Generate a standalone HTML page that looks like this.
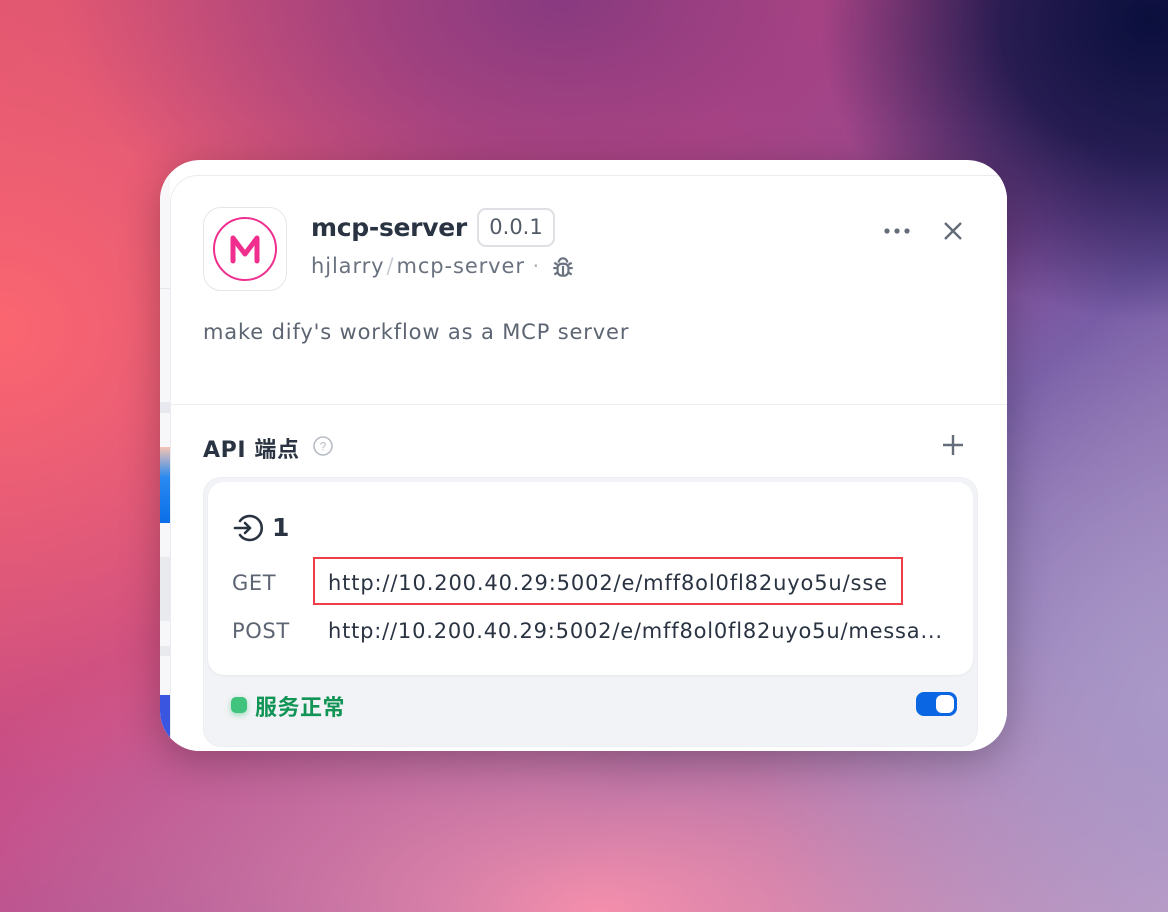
<!DOCTYPE html>
<html><head><meta charset="utf-8"><style>
*{margin:0;padding:0;box-sizing:border-box}
body{width:1168px;height:912px;overflow:hidden;position:relative;font-family:"DejaVu Sans","Noto Sans CJK SC",sans-serif;
background:
radial-gradient(ellipse 330px 300px at 1150px 20px,#0a0f3c 0%,rgba(20,20,70,.85) 45%,rgba(40,30,90,0) 100%),
radial-gradient(ellipse 420px 500px at 1168px 700px,#a998c8 0%,rgba(150,130,190,0) 100%),
radial-gradient(ellipse 500px 300px at 560px 0px,#883a80 0%,rgba(140,60,130,0) 100%),
radial-gradient(ellipse 520px 460px at 0px 330px,#fb6670 0%,rgba(244,98,108,0) 100%),
radial-gradient(ellipse 700px 350px at 600px 912px,#f58fac 0%,rgba(240,122,166,0) 100%),
linear-gradient(135deg,#d95270 0%,#c04a88 40%,#6a4c9c 68%,#c0a4cc 100%);}
.win{position:absolute;left:160px;top:160px;width:847px;height:591px;background:#fff;border-radius:40px;overflow:hidden;box-shadow:0 10px 40px rgba(0,0,0,.25)}
.strip{position:absolute;left:0;top:0;width:10px;height:591px;background:#f7f7f9}
.panel{position:absolute;left:10px;top:15px;width:840px;height:600px;background:#fff;border:1px solid #ececf0;border-radius:28px 0 0 0}
.abs{position:absolute}
</style></head><body>
<div class="win">
 <div class="strip">
  <div class="abs" style="top:128px;left:0;width:10px;height:1px;background:#e5e5ea"></div>
  <div class="abs" style="top:242px;left:0;width:10px;height:11px;background:#e8e9ee"></div>
  <div class="abs" style="top:287px;left:0;width:10px;height:76px;background:linear-gradient(#f5c4b4,#2a8af0 40%,#0a6ee8)"></div>
  <div class="abs" style="top:397px;left:0;width:10px;height:64px;background:#e9eaee"></div>
  <div class="abs" style="top:486px;left:0;width:10px;height:10px;background:#e9eaee"></div>
  <div class="abs" style="top:535px;left:0;width:10px;height:45px;background:#3a56e0"></div>
 </div>
 <div class="panel">
  <div class="abs" style="left:32px;top:31px;width:84px;height:84px;border:1px solid #e6e6ea;border-radius:18px;background:#fff">
   <svg width="84" height="84" viewBox="0 0 84 84" style="position:absolute;left:-1px;top:-1px"><circle cx="42" cy="42" r="31" fill="none" stroke="#ef2e8e" stroke-width="2"/><path d="M30 54V31l12 16 12-16v23" fill="none" stroke="#ef2e8e" stroke-width="5" stroke-linejoin="round" stroke-linecap="round"/></svg>
  </div>
  <div class="abs" style="left:140px;top:37px;font-size:25px;font-weight:bold;color:#2a3342;letter-spacing:-0.3px">mcp-server</div>
  <div class="abs" style="left:306px;top:32px;width:78px;height:39px;border:2px solid #dfe0e4;border-radius:9px;font-size:21px;color:#535b67;text-align:center;line-height:35px">0.0.1</div>
  <div class="abs" style="left:140px;top:78px;font-size:21px;color:#6a7280;white-space:nowrap;letter-spacing:0.9px">hjlarry<span style="color:#c8ccd2;margin:0 2px">/</span>mcp-server <span style="color:#b0b4ba">·</span></div>
  <svg class="abs" style="left:379px;top:78px" width="26" height="26" viewBox="0 0 24 24" fill="none" stroke="#6a7280" stroke-width="2"><path d="M8 8a4 4 0 0 1 8 0"/><rect x="7" y="9" width="10" height="11" rx="4"/><path d="M12 11v9M3 13h4M17 13h4M4 8l3 2M20 8l-3 2M4 19l3-2M20 19l-3-2"/></svg>
  <div class="abs" style="left:32px;top:144px;font-size:21px;color:#5d6573;letter-spacing:0.85px">make dify's workflow as a MCP server</div>
  <svg class="abs" style="left:712px;top:50px" width="28" height="10" viewBox="0 0 28 10" fill="#646c7a"><circle cx="4" cy="5" r="2.6"/><circle cx="14" cy="5" r="2.6"/><circle cx="24" cy="5" r="2.6"/></svg>
  <svg class="abs" style="left:771px;top:44px" width="22" height="22" viewBox="0 0 22 22" stroke="#646c7a" stroke-width="2.4"><path d="M3 3l16 16M19 3L3 19"/></svg>
  <div class="abs" style="left:0;top:228px;width:840px;height:1px;background:#efeff2"></div>
  <div class="abs" style="left:32px;top:256px;font-size:22px;font-weight:bold;color:#2a3342;letter-spacing:0.6px">API 端点</div>
  <svg class="abs" style="left:141px;top:259px" width="22" height="22" viewBox="0 0 22 22"><circle cx="11" cy="11" r="9" fill="none" stroke="#b8bcc4" stroke-width="1.6"/><text x="11" y="15.5" text-anchor="middle" font-size="12" fill="#b8bcc4" font-family="Liberation Sans">?</text></svg>
  <svg class="abs" style="left:771px;top:258px" width="22" height="22" viewBox="0 0 22 22" stroke="#646c7a" stroke-width="2.4"><path d="M11 1v20M1 11h20"/></svg>
  <div class="abs" style="left:32px;top:301px;width:775px;height:270px;background:#f2f3f6;border-radius:18px;border:1px solid #eceef2">
   <div class="abs" style="left:4px;top:4px;width:765px;height:193px;background:#fff;border-radius:16px;box-shadow:0 1px 2px rgba(0,0,0,.05)">
    <svg class="abs" style="left:24px;top:30px" width="32" height="32" viewBox="0 0 32 32" fill="none" stroke="#2a3342" stroke-width="2.6" stroke-linecap="round" stroke-linejoin="round"><path d="M8 9a12 12 0 1 1 0 14"/><path d="M3 16h15M13 11l5 5-5 5"/></svg>
    <div class="abs" style="left:64px;top:31px;font-size:25px;font-weight:bold;color:#2a3342">1</div>
    <div class="abs" style="left:24px;top:89px;font-size:21px;color:#5d6573;letter-spacing:0.6px">GET</div>
    <div class="abs" style="left:24px;top:137px;font-size:21px;color:#5d6573;letter-spacing:0.6px">POST</div>
    <div class="abs" style="left:105px;top:75px;width:590px;height:48px;border:2px solid #ef3d4a"></div>
    <div class="abs" style="left:120px;top:89px;font-size:21px;color:#2a3342;white-space:nowrap;letter-spacing:0.85px">http://10.200.40.29:5002/e/mff8ol0fl82uyo5u/sse</div>
    <div class="abs" style="left:120px;top:137px;font-size:21px;color:#2a3342;white-space:nowrap;letter-spacing:0.8px">http://10.200.40.29:5002/e/mff8ol0fl82uyo5u/messa...</div>
   </div>
   <div class="abs" style="left:27px;top:219px;width:16px;height:16px;border-radius:5px;background:#3fc37d;box-shadow:0 2px 6px rgba(63,195,125,.5)"></div>
   <div class="abs" style="left:51px;top:212px;font-size:22px;font-weight:bold;color:#119456;letter-spacing:0.5px">服务正常</div>
   <div class="abs" style="left:712px;top:214px;width:41px;height:24px;border-radius:8px;background:#0b66e4"><div class="abs" style="right:3px;top:3px;width:18px;height:18px;border-radius:6px;background:#fff"></div></div>
  </div>
 </div>
</div>
</body></html>
